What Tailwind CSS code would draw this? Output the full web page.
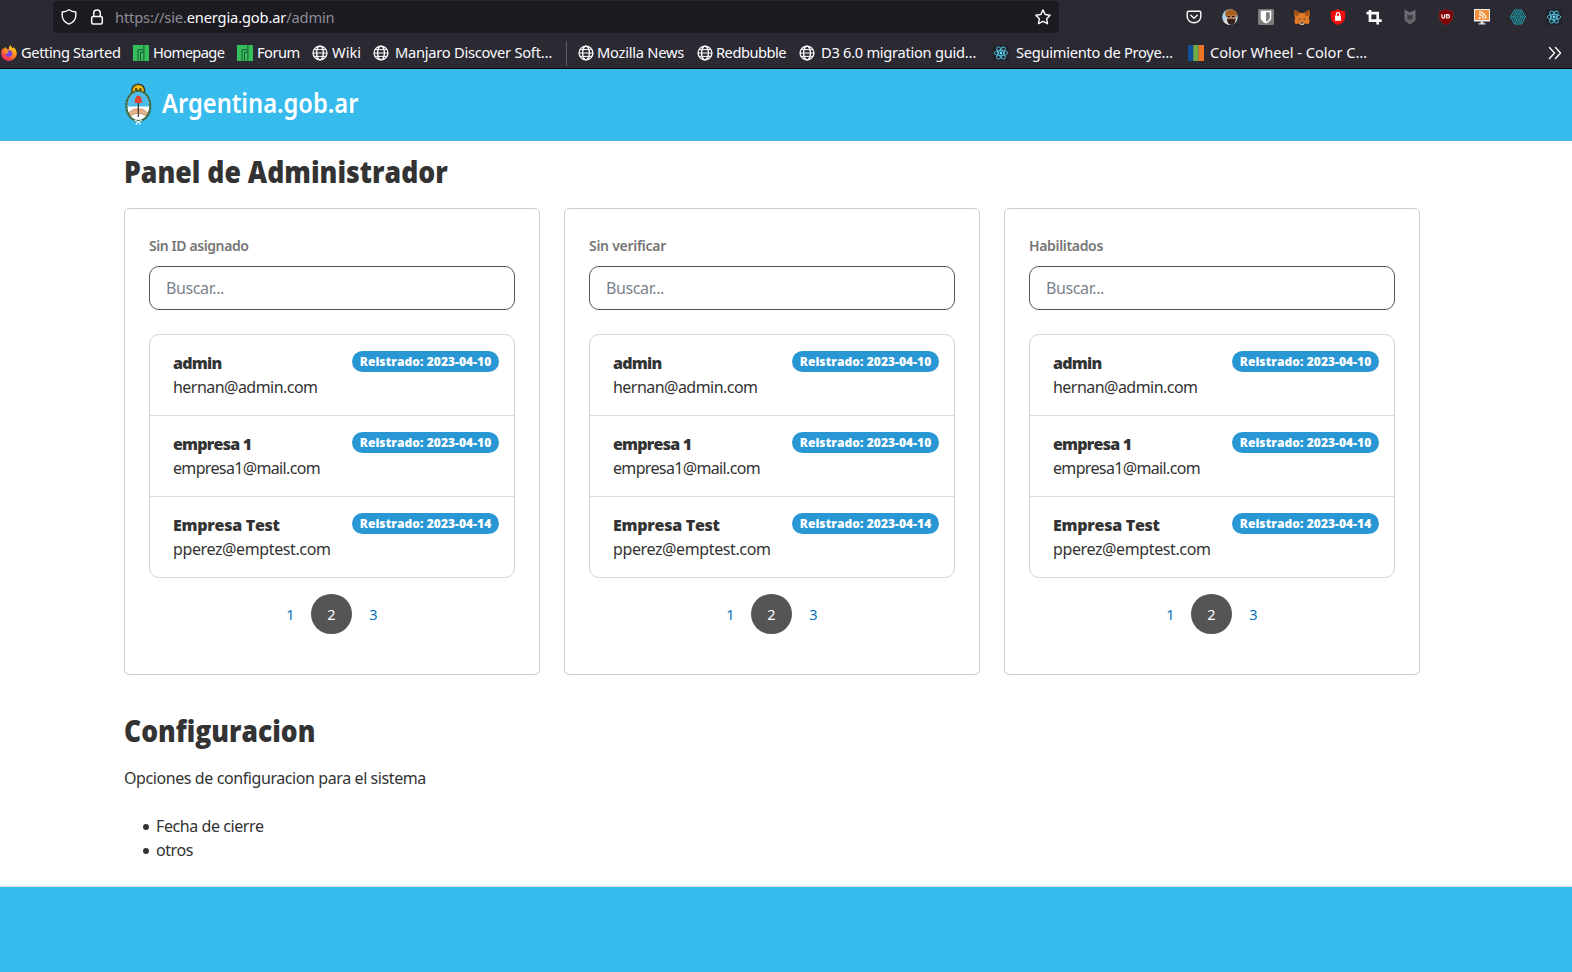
<!DOCTYPE html>
<html lang="es">
<head>
<meta charset="utf-8">
<title>Panel de Administrador</title>
<script src="https://cdn.jsdelivr.net/npm/@tailwindcss/browser@4"></script>
</head>
<body class="h-[972px] w-[1572px] overflow-hidden bg-white font-['Noto_Sans',sans-serif] text-[#333]">

<svg class="hidden">
  <symbol id="globe" viewBox="0 0 16 16"><g fill="none" stroke="#fbfbfe" stroke-width="1.4"><circle cx="8" cy="8" r="6.9"/><ellipse cx="8" cy="8" rx="3.4" ry="6.9"/><path d="M1 8h14M2.3 4.6h11.4M2.3 11.4h11.4" stroke-width="1"/></g></symbol>
  <symbol id="manjaro" viewBox="0 0 16 16"><path fill="#35bf5c" d="M0 0h16v16H0z"/><path fill="none" stroke="#1d5a35" stroke-width="1" d="M10.9 0v16M10.500 4.700H5v11.300M7.500 16V7.300h3"/></symbol>
  <symbol id="react" viewBox="0 0 16 16"><rect width="16" height="16" rx="1" fill="#20232a"/><g fill="none" stroke="#53c1de" stroke-width=".9"><ellipse cx="8" cy="8" rx="6.800" ry="2.600"/><ellipse cx="8" cy="8" rx="6.800" ry="2.600" transform="rotate(60 8 8)"/><ellipse cx="8" cy="8" rx="6.800" ry="2.600" transform="rotate(120 8 8)"/></g><circle cx="8" cy="8" r="1.400" fill="#61dafb"/></symbol>
</svg>

<header class="flex h-[69px] flex-col border-b border-black bg-[#2b2a33] text-[#fbfbfe]">
  <div class="flex h-[35px] pt-px">
    <div class="ml-[53px] flex h-8 w-[1006px] items-center rounded bg-[#1c1b22] pr-2 pl-2">
      <svg class="size-4" viewBox="0 0 16 16" fill="none" stroke="#fbfbfe" stroke-width="1.4" stroke-linejoin="round"><path d="M8 .8C6 2.200 3.600 2.900 1.200 3v3.500c0 4 2.800 7 6.800 8.700 4-1.700 6.800-4.700 6.800-8.700V3C12.400 2.900 10 2.200 8 .8z"/></svg>
      <svg class="ml-3 size-4" viewBox="0 0 16 16" fill="none" stroke="#fbfbfe" stroke-width="1.500"><rect x="2.700" y="7.500" width="10.600" height="7.500" rx="1.500"/><path d="M4.700 7.500V4.200a3.300 3.300 0 0 1 6.600 0v3.300"/></svg>
      <span class="ml-[10px] text-[14.67px] tracking-[-0.15px] whitespace-nowrap text-[#8f8e96]">https://sie.<span class="text-[#fbfbfe]">energia.gob.ar</span>/admin</span>
      <svg class="ml-auto size-4" viewBox="0 0 16 16" fill="none" stroke="#fbfbfe" stroke-width="1.400" stroke-linejoin="round"><path d="M8 .9l2.200 4.600 5 .7-3.600 3.500.9 5L8 12.300l-4.500 2.400.9-5L.8 6.200l5-.7z"/></svg>
    </div>
    <div class="ml-[127px] flex h-8 w-[376px] items-center justify-between">
      <svg class="size-4" viewBox="0 0 16 16" fill="none" stroke="#fbfbfe" stroke-width="1.400" stroke-linecap="round" stroke-linejoin="round"><path d="M2.500 2.200h11a1.300 1.300 0 0 1 1.300 1.300V7.500a6.800 6.300 0 0 1-13.600 0V3.500a1.300 1.300 0 0 1 1.300-1.300z"/><path d="M4.800 6.300 8 9.300l3.200-3"/></svg>
      <svg class="size-4" viewBox="0 0 16 16"><circle cx="8" cy="8" r="7.800" fill="#a9d3ea"/><path d="M1.500 12.300A7.800 7.800 0 0 0 13 14l2-3-6-5z" fill="#e4e1dc"/><path d="M3.200 6C3 2 5.500.6 9 .6s6 2 6 5l-.5 2.500H4.500z" fill="#a8601f"/><path d="M5 6.500h8.500v3.500c0 2.500-2 5-4.300 5S5 13 5 10z" fill="#c08a66"/><path d="M5 9.500c1.500 1.500 2.500 0 4.200.3 1.800-.3 2.800 1.200 4.300-.5.3 4-1.500 6.500-4.300 6.500S5 13 5 9.500z" fill="#33211b"/><path d="M5.600 7.700h2.600M10 7.700h2.500" stroke="#20120e" stroke-width="1.200"/></svg>
      <svg class="size-4" viewBox="0 0 16 16"><rect width="16" height="16" rx="1.500" fill="#7d7d7d"/><path fill="#fff" d="M2.700 1.800h10.600v6.500c0 3.200-2.500 5-5.300 6.200-2.800-1.200-5.300-3-5.300-6.200z"/><path fill="#7d7d7d" d="M8 3.300h3.800v5c0 2-1.700 3.500-3.800 4.500z"/></svg>
      <svg class="size-4" viewBox="0 0 16 16"><path fill="#e27a25" d="M.8.800 6 4h4L15.200.800l.6 4.500-1 4 .9 3-1.200 3-3.500-.8L9.500 16h-3L5 14.500l-3.500.8-1.200-3 .9-3-1-4z"/><path fill="#a3541b" d="M.8.800 5.500 3.800 4 7.500.6 6zM15.200.800l-4.700 3L12 7.500 15.400 6z"/><path fill="#233447" d="m4.200 9.500 2.300.6-.3 1.200zM11.800 9.500l-2.300.6.3 1.200z"/><path fill="#d7c1b3" d="M5.500 13.800h5L9.500 16h-3z"/><path fill="#233447" d="M6.700 13.300h2.600v1.300H6.700z"/></svg>
      <svg class="size-4" viewBox="0 0 16 16"><path fill="#f40b0b" d="M8 0c2 1.500 4.500 2.200 7.200 2.300V7c0 4.500-2.500 7.300-7.200 9C3.300 14.300.8 11.500.8 7V2.300C3.500 2.200 6 1.500 8 0z"/><rect x="5" y="6.800" width="6" height="5" fill="#fff"/><path fill="none" stroke="#fff" stroke-width="1.200" d="M6.300 7V5.300a1.700 1.700 0 0 1 3.400 0V7"/></svg>
      <svg class="size-4" viewBox="0 0 16 16" fill="none" stroke="#fbfbfe" stroke-width="2.700"><path d="M4 1v10.700h11.700M.5 4.200h11.200V15.500"/></svg>
      <svg class="size-4" viewBox="0 0 16 16"><path fill="#6d6d74" d="M2.500.500 8 3.500l5.500-3v11L8 15.500l-5.500-4z"/><path fill="#3c3b43" d="M5.300 5 8 6.700 10.700 5v4.500L8 11.300 5.300 9.500z"/><path fill="none" stroke="#45444c" stroke-width=".6" d="m2.500 9 5.500 4 5.500-4"/></svg>
      <svg class="size-4" viewBox="0 0 16 16"><path fill="#800000" stroke="#a33" stroke-width=".4" d="M8 .3c2 1.300 4.500 2 6.800 2.100V7c0 4.300-2.400 7-6.800 8.700C3.600 14 1.200 11.300 1.200 7V2.400C3.500 2.300 6 1.600 8 .3z"/><path fill="none" stroke="#fff" stroke-width="1.200" d="M3.900 5.300v2.500a1.400 1.400 0 0 0 2.800 0V5.300M8.700 5.700h1.500a1.700 1.700 0 0 1 0 3.300H8.700z"/></svg>
      <svg class="size-4" viewBox="0 0 16 16"><rect width="16" height="12.500" rx=".6" fill="#f4f4f4"/><rect x="1" y="1" width="14" height="10" fill="#f4903a"/><path fill="#ddd" d="M6.500 12.500h3v1.700h2V15.500h-7v-1.300h2z"/><circle cx="5.700" cy="9" r="1.100" fill="#fff"/><path fill="none" stroke="#fff" stroke-width="1.300" d="M5 5.500a4.300 4.300 0 0 1 4.200 4.300M5 2.900a6.900 6.900 0 0 1 6.800 6.900"/></svg>
      <svg class="size-4" viewBox="0 0 16 16" fill="none" stroke="#1fa2b2" stroke-width="1"><path d="M4.500 1h7L15.500 8l-4 7h-7L.5 8zM5.500 3h5L13.200 8l-2.700 5h-5L2.800 8zM6.500 5h3L11 8l-1.500 3h-3L5 8z"/><path stroke-width=".6" d="M4.500 1l7 14M11.500 1l-7 14M.5 8h15"/></svg>
      <svg class="size-4"><use href="#react"/></svg>
    </div>
  </div>
  <nav class="flex h-[33px] items-center pt-[3px] pl-px text-[14.67px] leading-5 whitespace-nowrap">
    <a class="flex w-[132px] items-center"><svg class="mr-1 size-4" viewBox="0 0 16 16"><defs><linearGradient id="ff" x1=".8" y1="0" x2=".2" y2="1"><stop offset="0" stop-color="#ffe226"/><stop offset=".45" stop-color="#ff8a1c"/><stop offset="1" stop-color="#f5156c"/></linearGradient></defs><path fill="url(#ff)" d="M9 .3c1.300 1 2 2 2.300 3 .8-.3 1-.8 1-1.300 2.200 1.700 3.500 4 3.500 6.500A7.800 7.500 0 0 1 .2 8.300C.2 5.800 1.200 4 2.400 3c0 .7.200 1 .5 1.300C3.400 3 4.300 2.300 5 2c0 1 .6 1.900 1.500 2.200L8 4C7.800 2.700 8.200 1.200 9 .3z"/><circle cx="7.900" cy="8.500" r="3.300" fill="#7543e5"/><path fill="#ff9a1f" d="M3.500 6.500C5 5.500 7 6 8 7c-.8 1-2 .8-2.500 1.700-1 .3-2-.7-2-2.200z"/></svg><span class="pb-[2px] tracking-[-0.39px]">Getting Started</span></a>
    <a class="flex w-[104px] items-center"><svg class="mr-1 size-4"><use href="#manjaro"/></svg><span class="pb-[2px] tracking-[-0.6px]">Homepage</span></a>
    <a class="flex w-[75px] items-center"><svg class="mr-1 size-4"><use href="#manjaro"/></svg><span class="pb-[2px] tracking-[-0.5px]">Forum</span></a>
    <a class="flex w-[61px] items-center"><svg class="mr-1 size-4"><use href="#globe"/></svg><span class="pb-[2px]">Wiki</span></a>
    <a class="flex w-[193px] items-center"><svg class="mr-[6px] size-4"><use href="#globe"/></svg><span class="pb-[2px] tracking-[-0.25px]">Manjaro Discover Soft…</span></a>
    <i class="mr-[11px] h-[25px] w-px bg-[#5b5b66]"></i>
    <a class="flex w-[119px] items-center"><svg class="mr-[3px] size-4"><use href="#globe"/></svg><span class="pb-[2px] tracking-[-0.25px]">Mozilla News</span></a>
    <a class="flex w-[102px] items-center"><svg class="mr-[3px] size-4"><use href="#globe"/></svg><span class="pb-[2px] tracking-[-0.5px]">Redbubble</span></a>
    <a class="flex w-[194px] items-center"><svg class="mr-[6px] size-4"><use href="#globe"/></svg><span class="pb-[2px] tracking-[-0.28px]">D3 6.0 migration guid…</span></a>
    <a class="flex w-[195px] items-center"><svg class="mr-[7px] size-4"><use href="#react"/></svg><span class="pb-[2px] tracking-[-0.27px]">Seguimiento de Proye…</span></a>
    <a class="flex items-center"><svg class="mr-[6px] size-4" viewBox="0 0 16 16"><path fill="#10509a" d="M0 0h5.300v16H0z"/><path fill="#70ad47" d="M5.300 0h5.400v16H5.300z"/><path fill="#ee7523" d="M10.700 0H16v16h-5.300z"/></svg><span class="pb-[2px] tracking-[-0.02px]">Color Wheel - Color C…</span></a>
    <svg class="mr-[10px] ml-auto size-[14px]" viewBox="0 0 14 14" fill="none" stroke="#fbfbfe" stroke-width="1.400" stroke-linecap="round" stroke-linejoin="round"><path d="m1.500 1.500 5 5.500-5 5.500M7.500 1.500l5 5.500-5 5.500"/></svg>
  </nav>
</header>

<div class="flex h-[72px] items-center bg-[#37bbed] pb-[3px] pl-[124px]">
  <svg class="h-[42px] w-7" viewBox="0 0 28 42"><path d="M8 10C7 4.500 10 1.200 14.300 1.200S21.500 4.500 20.500 10z" fill="#f2b90f" stroke="#3f3d2b" stroke-width="1.600"/><path d="M11 5h2v1.500h2.500V5h2v3.500H11z" fill="#6b4c00"/><ellipse cx="14.300" cy="23" rx="11" ry="14.500" fill="#fff"/><path d="M3.300 23.500a11 14.500 0 0 1 22 0z" fill="#4dbdec"/><path d="M4 30c3-1 4-4 7.500-4H17c3.500 0 4.500 3 7.500 4l-2.500 2.500c-3-.5-4-2-6-2h-3.500c-2 0-3 1.500-6 2z" fill="#e5b48c" stroke="#9b6b49" stroke-width=".5"/><path d="M14.300 19v15" stroke="#3b2e25" stroke-width="1.200"/><path d="M10.700 20c0-4 1.300-7.500 3.800-7.500s3.500 3.500 3.300 7.500z" fill="#e2452f"/><ellipse cx="14.300" cy="23" rx="12" ry="15" fill="none" stroke="#35603f" stroke-width="2"/><ellipse cx="14.300" cy="23" rx="12" ry="15" fill="none" stroke="#7fae5c" stroke-width=".9" stroke-dasharray="1.500 2"/><path d="m10.500 37 3.800 2 3.800-2M14.300 38.500l-2.300 3M14.300 38.500l2.300 3" fill="none" stroke="#d8f0fb" stroke-width="1.300"/></svg>
  <span class="ml-[10px] inline-block origin-left scale-x-[.877] text-[27px] font-semibold whitespace-nowrap text-white">Argentina.gob.ar</span>
</div>

<main class="h-[745px] px-[124px] pt-2">
  <h1 class="h-[59px] w-[400px] origin-left scale-x-[.888] font-['Open_Sans',sans-serif] text-[30px] leading-[46px] font-extrabold whitespace-nowrap">Panel de Administrador</h1>
  <div id="cards" class="flex w-[1296px] gap-6"></div>
  <h2 class="mt-[33px] w-[400px] origin-left scale-x-[.882] font-['Open_Sans',sans-serif] text-[30px] leading-[46px] font-extrabold">Configuracion</h2>
  <p class="mt-3 text-base leading-6 tracking-[-0.41px]">Opciones de configuracion para el sistema</p>
  <ul class="mt-6 pl-[19px] text-base leading-6 tracking-[-0.42px]">
    <li class="flex items-center gap-[7px]"><i class="mt-[2px] size-[6px] rounded-full bg-[#333]"></i>Fecha de cierre</li>
    <li class="flex items-center gap-[7px]"><i class="mt-[2px] size-[6px] rounded-full bg-[#333]"></i>otros</li>
  </ul>
</main>
<footer class="h-[86px] border-t border-[#ddd] bg-[#37bbed]"></footer>

<script>
const users = [
  ['admin', 'hernan@admin.com', '2023-04-10', 'tracking-[-0.72px]', 'tracking-[-0.535px]'],
  ['empresa 1', 'empresa1@mail.com', '2023-04-10', 'tracking-[-0.78px]', 'tracking-[-0.654px]'],
  ['Empresa Test', 'pperez@emptest.com', '2023-04-14', 'tracking-[-0.26px]', 'tracking-[-0.385px]'],
];
const lists = [
  ['Sin ID asignado', 'tracking-[-0.41px]'],
  ['Sin verificar', 'tracking-[-0.275px]'],
  ['Habilitados', 'tracking-[-0.328px]'],
];
document.getElementById('cards').innerHTML = lists.map(([title, titleTracking]) => `
  <section class="h-[467px] w-[416px] rounded-[5px] border border-[#ccc] px-6 pt-[25px]">
    <label class="block h-8 text-[14px] leading-6 font-semibold text-[#767676] ${titleTracking}">${title}</label>
    <div class="flex h-11 items-center rounded-[10px] border border-[#555] px-4 text-base tracking-[-0.39px] text-[#7b838a]">Buscar...</div>
    <ul class="mt-6 rounded-[10px] border border-[#d6d6d6]">
      ${users.map(([name, mail, date, nameTracking, mailTracking]) => `
      <li class="flex h-20 items-start justify-between border-[#ddd] pt-4 pr-[15px] pl-[23px] not-first:h-[81px] not-first:border-t">
        <div class="text-base leading-6"><div class="font-['Open_Sans',sans-serif] font-extrabold ${nameTracking}">${name}</div><div class="${mailTracking}">${mail}</div></div>
        <span class="flex h-[21px] w-[147px] items-center justify-center rounded-full bg-[#2897d4] font-['Open_Sans',sans-serif] text-[12px] font-extrabold tracking-[0.07px] whitespace-nowrap text-white">Reistrado: ${date}</span>
      </li>`).join('')}
    </ul>
    <nav class="mt-4 flex justify-center pr-px text-[14.5px] text-[#0072bb]">
      <a class="flex h-10 w-[41px] items-center justify-center pt-[2px]">1</a>
      <a class="flex h-10 w-[41px] items-center justify-center rounded-full bg-[#555] pt-[2px] text-white">2</a>
      <a class="flex h-10 w-[41px] items-center justify-center pt-[2px] pl-[2px]">3</a>
    </nav>
  </section>`).join('');
</script>
</body>
</html>
